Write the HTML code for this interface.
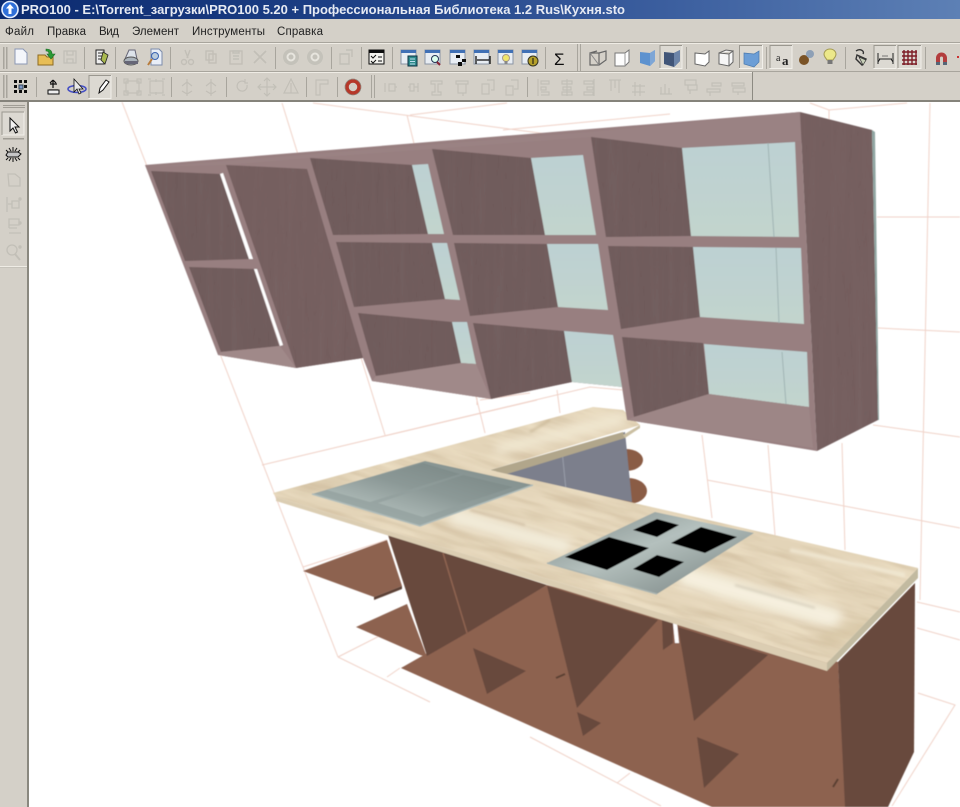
<!DOCTYPE html>
<html><head><meta charset="utf-8"><title>PRO100</title>
<style>html,body{margin:0;padding:0;background:#fff;width:960px;height:807px;overflow:hidden}svg{display:block}</style></head>
<body>
<svg xmlns="http://www.w3.org/2000/svg" width="960" height="807" viewBox="0 0 960 807">
<defs>
<linearGradient id="tb" x1="0" x2="1" y1="0" y2="0"><stop offset="0" stop-color="#0b2a6f"/><stop offset=".35" stop-color="#1d3f85"/><stop offset=".7" stop-color="#3c5f9f"/><stop offset="1" stop-color="#5d80b5"/></linearGradient>
<linearGradient id="gl" x1="0" x2="0" y1="0" y2="1"><stop offset="0" stop-color="#bdd1d3"/><stop offset="1" stop-color="#c2d4cd"/></linearGradient>
<linearGradient id="sink" x1="0" x2="1" y1="1" y2="0"><stop offset="0" stop-color="#a3b0ae"/><stop offset="1" stop-color="#7f8c8a"/></linearGradient>
<linearGradient id="basinA" x1="0" x2="1" y1="1" y2="0"><stop offset="0" stop-color="#b3bfbc"/><stop offset=".5" stop-color="#8c9997"/><stop offset="1" stop-color="#7b8886"/></linearGradient>
<linearGradient id="hob" x1="0" x2="1" y1="0" y2="1"><stop offset="0" stop-color="#7d8886"/><stop offset=".45" stop-color="#b4c0bd"/><stop offset="1" stop-color="#747f7e"/></linearGradient>
<filter id="wood" x="0" y="0" width="1" height="1"><feTurbulence type="fractalNoise" baseFrequency=".16 .008" numOctaves="2" seed="3" result="n"/><feColorMatrix in="n" type="matrix" values="0 0 0 0 .25 0 0 0 0 .18 0 0 0 0 .18 0 0 0 .3 -.11" result="m"/><feComposite in="m" in2="SourceGraphic" operator="in" result="c"/><feMerge><feMergeNode in="SourceGraphic"/><feMergeNode in="c"/></feMerge></filter>
<filter id="marble" filterUnits="userSpaceOnUse" x="320" y="400" width="660" height="200" color-interpolation-filters="sRGB"><feTurbulence type="fractalNoise" baseFrequency=".012 .09" numOctaves="3" seed="8"/><feColorMatrix type="matrix" values="0 0 0 0 .97 0 0 0 0 .93 0 0 0 0 .83 1.5 0 0 0 -.55"/></filter>
<filter id="marble2" filterUnits="userSpaceOnUse" x="320" y="400" width="660" height="200" color-interpolation-filters="sRGB"><feTurbulence type="fractalNoise" baseFrequency=".015 .13" numOctaves="3" seed="21"/><feColorMatrix type="matrix" values="0 0 0 0 .68 0 0 0 0 .57 0 0 0 0 .43 1.4 0 0 0 -.62"/></filter>
<filter id="soft" x="-5%" y="-5%" width="110%" height="110%"><feGaussianBlur stdDeviation=".45"/></filter>
<filter id="st" filterUnits="userSpaceOnUse" x="0" y="0" width="960" height="807"><feGaussianBlur stdDeviation="5"/></filter>
<filter id="st2" filterUnits="userSpaceOnUse" x="0" y="0" width="960" height="807"><feGaussianBlur stdDeviation="1.2"/></filter>
<filter id="ic"><feGaussianBlur stdDeviation=".3"/></filter>
<clipPath id="top"><polygon points="273,493 593,407 623,410 640,425 490,470 918,568 827,663 276,497"/></clipPath>
<g id="win"><rect x="-8" y="-8" width="15" height="14" fill="#e8edf3" stroke="#8a95a5"/><rect x="-8" y="-8" width="15" height="3" fill="#3f6fb5"/></g>
</defs>

<!-- viewport -->
<rect width="960" height="807" fill="#fff"/>
<g filter="url(#soft)">
<g fill="none" stroke="#f0d2c8" stroke-width="1">
<path d="M122 102L338 657M282 103L385 435M407 115L485 433M262 465L537 400M262 465L590 387L623 390M303 567L387 540"/>
<path d="M338 657L430 702M338 657L407 622M313 103L600 141M410 115L507 103M503 130L670 114M810 103L829 110L907 103M829 110V120"/>
<path d="M930 103L920 600M877 217H960M878 328L960 332M873 425L960 437M707 480L960 528M702 435L712 518M768 445L775 535M842 443L845 550"/>
<path d="M917 602L960 612M917 628L960 640M918 693L955 705L892 806M530 737L661 806M617 783L630 773M387 677L400 668M557 390L560 413M480 400L530 393M477 398V405"/>
</g>
<!-- floor pieces -->
<polygon points="303,571 387,540 402,586 374,597" fill="#8d6250"/>
<polygon points="374,597 402,586 402,589 374,600" fill="#5b4034"/>
<polygon points="356,627 407,604 427,657 420,655" fill="#8d6250"/>
<polygon points="401,668 547,585 838,662 846,807 712,807" fill="#8d6250"/>
<!-- side -->
<polygon points="838,662 915,583 914,752 888,807 845,807" fill="#68493c"/>
<!-- dark panels -->
<polygon points="388,535 547,585 467,633 427,656" fill="#68493c"/>
<path d="M443 553L467 633" stroke="#8d6250" stroke-width="1.6"/>
<polygon points="547,586 658,620 577,708" fill="#68493c"/>
<polygon points="662,620 673,623 673,643 663,650" fill="#68493c"/>
<polygon points="673,623 677,623 679,643 675,643" fill="#fff"/>
<polygon points="678,627 768,655 694,721" fill="#68493c"/>
<polygon points="473,648 526,671 487,694" fill="#68493c"/>
<polygon points="577,712 601,723 583,736" fill="#68493c"/>
<polygon points="697,737 739,754 704,788" fill="#68493c"/>
<path d="M556 678L565 674M833 787L838 779" stroke="#5a3f33" stroke-width="2"/>
<!-- round shelves -->
<ellipse cx="628" cy="491" rx="19" ry="13" fill="#8a5b45"/>
<ellipse cx="626" cy="460" rx="17" ry="11" fill="#8a5b45"/>
<!-- gray cabinet -->
<polygon points="495,472 625,432 632,502 530,482" fill="#7b7f8c"/>
<path d="M562 450L566 490" stroke="#9a9ea9" stroke-width="1"/>
<!-- counter -->
<polygon points="490,470 623,432 625,438 507,474" fill="#b1a68b"/>
<polygon points="623,435 640,425 640,428 625,438" fill="#cbbfa3"/>
<polygon points="276,497 827,663 827,671 276,501" fill="#dbcdb2"/>
<polygon points="827,663 918,568 918,578 827,671" fill="#c2baa0"/>
<polygon points="273,493 593,407 623,410 640,425 490,470 918,568 827,663 276,497" fill="#e3d4b8"/>
<g clip-path="url(#top)">
<rect x="320" y="400" width="660" height="200" filter="url(#marble)" transform="rotate(16 600 540) translate(-60 0)" opacity=".6"/>
<rect x="320" y="400" width="660" height="200" filter="url(#marble2)" transform="rotate(16 600 540) translate(-60 0)" opacity=".4"/>
<path d="M495 450L625 418" stroke="#f1e8d2" stroke-width="12" filter="url(#st)"/>
<path d="M530 432L550 420" stroke="#b9a583" stroke-width="2" filter="url(#st2)" opacity=".6"/>
<path d="M450 515L570 548" stroke="#f3ecda" stroke-width="16" filter="url(#st)"/>
<path d="M470 510L525 525" stroke="#a98d6e" stroke-width="1.2" filter="url(#st2)" opacity=".6"/>
<path d="M680 575L840 620" stroke="#f6f0df" stroke-width="20" filter="url(#st)"/>
<path d="M735 585L815 608" stroke="#a9a38f" stroke-width="1.4" filter="url(#st2)" opacity=".6"/>
<path d="M790 550L905 575" stroke="#f2ead6" stroke-width="4" filter="url(#st2)" opacity=".8"/>
<path d="M300 490L350 478" stroke="#bda98a" stroke-width="3" filter="url(#st)" opacity=".6"/>
<path d="M880 625L820 640" stroke="#d3c19f" stroke-width="16" filter="url(#st)" opacity=".6"/>
</g>
<!-- sink -->
<polygon points="312,494 425,461 533,485 420,526" fill="url(#sink)"/>
<polygon points="327,490 423,463 460,474 370,502" fill="url(#basinA)"/>
<polygon points="378,503 463,475 513,487 423,517" fill="url(#basinA)"/>
<path d="M312 494L420 526L533 485" fill="none" stroke="#aebbb9" stroke-width="1.5"/>
<!-- hob -->
<polygon points="547,563 655,512 754,533 657,594" fill="url(#hob)"/>
<path d="M547 563L657 594" stroke="#a7b3b1" stroke-width="1.5"/>
<g fill="#000"><polygon points="565,557 609,537 649,548 607,570"/><polygon points="633,530 657,519 679,525 657,537"/><polygon points="671,543 701,527 737,537 705,553"/><polygon points="633,569 657,555 684,562 659,577"/></g>

<!-- upper cabinets -->
<polygon points="145,165 800,112 817,451 627,420 622,387 572,382 491,399 372,381 363,358 296,368 218,355" fill="#987f80"/>
<polygon points="150,167 590,132 800,112 806,140 682,148 591,137 432,149 310,158 226,165" fill="#9a8283"/>
<g filter="url(#wood)">
<polygon points="800,112 872,130 878,420 817,451" fill="#745f5f"/>
<polygon points="151,171 220,174 249,259 185,261" fill="#6f5b5b"/>
<polygon points="189,267 254,269 279,346 221,352" fill="#6f5b5b"/>
<polygon points="226,165 307,169 363,358 296,368" fill="#745f5f"/>
<polygon points="310,158 412,165 428,234 333,235" fill="#6f5b5b"/>
<polygon points="336,242 432,243 445,299 354,307" fill="#6f5b5b"/>
<polygon points="358,313 452,322 461,363 376,376" fill="#6f5b5b"/>
<polygon points="432,149 531,158 545,235 453,235" fill="#6f5b5b"/>
<polygon points="454,243 547,244 558,307 470,316" fill="#6f5b5b"/>
<polygon points="473,323 564,331 572,382 491,399" fill="#6f5b5b"/>
<polygon points="591,137 682,148 691,236 606,237" fill="#6f5b5b"/>
<polygon points="608,246 693,247 700,317 621,329" fill="#6f5b5b"/>
<polygon points="622,337 703,343 709,394 634,417" fill="#6f5b5b"/>
</g>
<polygon points="872,130 875,132 879,420 878,420" fill="#8fa5a1"/>
<g fill="#fff"><polygon points="220,174 223,173 253,259 249,259"/><polygon points="254,269 257,269 283,345 280,346"/></g>
<g fill="url(#gl)">
<polygon points="412,165 428,164 444,234 428,234"/>
<polygon points="432,243 447,243 460,300 445,299"/>
<polygon points="452,322 467,322 476,364 461,363"/>
<polygon points="531,158 583,155 596,235 545,235"/>
<polygon points="547,244 598,244 608,310 558,307"/>
<polygon points="564,331 613,335 622,387 572,382"/>
<polygon points="682,148 795,142 799,237 691,236"/>
<polygon points="693,247 801,248 804,324 700,317"/>
<polygon points="704,344 807,352 809,407 709,394"/>
</g>
<path d="M768 143L774 237M776 248L779 323M782 352L786 404" stroke="#9fb3b3" stroke-width="1" fill="none"/>
<polygon points="218,355 221,352 280,346 296,368" fill="#a08989"/>
<polygon points="372,381 376,376 461,363 476,364 491,399" fill="#a08989"/>
<polygon points="627,420 634,417 709,394 809,407 813,448" fill="#9d8686"/>
</g>

<!-- title bar -->
<rect width="960" height="19" fill="url(#tb)"/>
<circle cx="10" cy="9.5" r="8" fill="#2f6fd8" stroke="#e8f0ff" stroke-width="1.6"/>
<path d="M10 4L14 8.5H11.5V14H8.5V8.5H6Z" fill="#fff"/>
<text x="21" y="14" font-family="'Liberation Sans','Noto Sans CJK SC',sans-serif" font-size="13" font-weight="700" fill="#e6eaf3" textLength="604" lengthAdjust="spacing">PRO100 - E:\Torrent_загрузки\PRO100 5.20 + Профессиональная Библиотека 1.2 Rus\Кухня.sto</text>

<!-- menu + toolbars -->
<rect y="19" width="960" height="83" fill="#d4d0c8"/>
<g font-family="'Liberation Sans','Noto Sans CJK SC',sans-serif" font-size="11.5" fill="#222">
<text x="5" y="35" textLength="29">Файл</text><text x="47" y="35" textLength="39">Правка</text><text x="99" y="35" textLength="20">Вид</text><text x="132" y="35" textLength="47">Элемент</text><text x="192" y="35" textLength="73">Инструменты</text><text x="277" y="35" textLength="46">Справка</text>
</g>
<rect y="42" width="960" height="1" fill="#a8a59d"/>
<rect y="43" width="960" height="1" fill="#efece5"/>
<rect y="71" width="960" height="1" fill="#a8a59d"/>
<rect y="72" width="752" height="1" fill="#efece5"/>
<rect y="100" width="960" height="2" fill="#85837b"/>
<rect x="752" y="72" width="1" height="28" fill="#8c8a82"/>

<!-- separators -->
<g fill="#a8a59d">
<path d="M3 47h1.5v22H3zM6 47h1.5v22H6zM84 47h1v22h-1zM115 47h1v22h-1zM170 47h1v22h-1zM275 47h1v22h-1zM331 47h1v22h-1zM361 47h1v22h-1zM392 47h1v22h-1zM545 47h1v22h-1zM577 44h1v27H577zM580 44h1v27H580zM686 47h1v22h-1zM766 47h1v22h-1zM845 47h1v22h-1zM925 47h1v22h-1z"/>
<path d="M3 75h1.5v23H3zM6 75h1.5v23H6zM36 77h1v20h-1zM116 77h1v20h-1zM171 77h1v20h-1zM226 77h1v20h-1zM306 77h1v20h-1zM337 77h1v20h-1zM371 75h1v23H371zM374 75h1v23H374zM527 77h1v20h-1z"/>
</g>
<!-- pressed buttons -->
<g fill="#dcd9d2" stroke="#f2f0ea">
<rect x="660" y="45.500" width="22" height="23"/><rect x="739.500" y="45.500" width="23" height="23"/><rect x="770" y="45.500" width="22" height="23"/><rect x="874" y="45.500" width="22" height="23"/><rect x="898" y="45.500" width="23" height="23"/>
<rect x="89" y="75.500" width="22" height="23"/>
</g>
<g fill="none" stroke="#9a978f"><path d="M660 68V45.500H682M739.500 68V45.500H762M770 68V45.500H792M874 68V45.500H896M898 68V45.500H921M89 98V75.500H111"/></g>

<g filter="url(#ic)">
<!-- row1 -->
<path d="M15 49h8l4 4v11H15z" fill="#f4f6fb" stroke="#8b98b5"/>
<path d="M38 55h7l2 2h6v8H38z" fill="#e7bd55" stroke="#8c6a22"/><path d="M46 49c4 0 6 2 6 5h3l-4 5-4-5h2c0-2-1-3-3-3z" fill="#2c9a36" stroke="#1b6a24" stroke-width=".6"/>
<g fill="none" stroke="#c2bfb7" stroke-width="1.3"><rect x="64" y="51" width="12" height="12"/><path d="M67 51v4h6v-4M67 63v-4h6v4"/></g>
<path d="M96 50h8v14H96z" fill="#eee" stroke="#222"/><path d="M98 53h5M98 56h5M98 59h4" stroke="#333"/><path d="M103 52l5 3-3 9-4-4z" fill="#a9b94f" stroke="#222" stroke-width=".8"/>
<path d="M125 59l4-9h6l2 9z" fill="#dde3ea" stroke="#667"/><ellipse cx="131" cy="61" rx="7" ry="4" fill="#aab3bb" stroke="#555"/><rect x="125" y="61" width="13" height="3" fill="#667"/>
<path d="M151 49h8l3 3v13h-11z" fill="#e9eef7" stroke="#7d8cab"/><circle cx="155" cy="56" r="3.500" fill="#bcd" stroke="#3a62b0"/><path d="M152 59l-4 6" stroke="#b77c3c" stroke-width="2"/>
<g fill="none" stroke="#c2bfb7" stroke-width="1.4">
<path d="M185 50l3 8M190 50l-3 8"/><circle cx="184" cy="62" r="2.500"/><circle cx="191" cy="62" r="2.500"/>
<rect x="206" y="51" width="7" height="9"/><rect x="209" y="54" width="7" height="9"/>
<rect x="230" y="51" width="12" height="13"/><path d="M233 53h6v-2h-6zM233 56h6M233 59h6"/>
<path d="M254 51l12 12M266 51l-12 12" stroke-width="1.6"/>
</g>
<g><circle cx="291" cy="57" r="8" fill="#c4c2ba"/><circle cx="291" cy="57" r="3.500" fill="none" stroke="#e7e5de" stroke-width="2"/><circle cx="315" cy="57" r="8" fill="#c4c2ba"/><circle cx="315" cy="57" r="3.500" fill="none" stroke="#e7e5de" stroke-width="2"/></g>
<path d="M340 54h9v10h-9zM346 50h6v7" fill="none" stroke="#c2bfb7" stroke-width="1.4"/>
<rect x="369" y="50" width="15" height="14" fill="#f4f3ee" stroke="#111"/><rect x="369" y="50" width="15" height="3" fill="#111"/><path d="M371 56l2 2 3-3M371 61l2 2 3-3M378 57h4M378 61h4" fill="none" stroke="#111"/>
<use href="#win" x="409" y="58"/><rect x="408" y="56" width="9" height="10" fill="#2e8b8b" stroke="#134"/><path d="M410 59h5M410 61.500h5M410 64h5" stroke="#bde"/>
<use href="#win" x="433" y="58"/><circle cx="435" cy="59" r="3.500" fill="#dfe" stroke="#235"/><path d="M437 62l3 3" stroke="#823" stroke-width="2"/>
<use href="#win" x="458" y="58"/><path d="M456 55h4v3h-4zM462 59h4v3h-4zM458 62h4v4h-4z" fill="#111"/>
<use href="#win" x="482" y="58"/><path d="M476 56v8M490 56v8M477 60h12" stroke="#111" stroke-width="1.3"/>
<use href="#win" x="506" y="58"/><circle cx="506" cy="58" r="3.500" fill="#f0e56a" stroke="#a98"/><rect x="504.500" y="61" width="3" height="3" fill="#888"/>
<use href="#win" x="530" y="58"/><circle cx="533" cy="61" r="5" fill="#b5a02c" stroke="#332"/><path d="M533 58v6" stroke="#111"/>
<text x="554" y="65" font-family="'Liberation Sans',sans-serif" font-size="17" fill="#111">Σ</text>
<path d="M590 53h9l7-2v9l-7 5h-9zM599 53v12M590 53l7-2" fill="none" stroke="#666" stroke-width="1.2"/><path d="M590 53l9 12" stroke="#888"/>
<path d="M615 53l10 0 4-3v12l-4 4-10 0z" fill="#fdfdfd" stroke="#777"/><path d="M625 53v13" stroke="#999"/>
<path d="M640 52l10 1 5-3v11l-5 5-10-3z" fill="#5d92cf"/><path d="M650 53v13l5-5V50z" fill="#7ea6d6"/>
<path d="M664 52l10 1 6-3v11l-6 6-10-3z" fill="#3f5478"/><path d="M674 53v14l6-6V50z" fill="#6c84a8"/>
<path d="M695 53l10 1 4-3v11l-4 4-10-2z" fill="#fff" stroke="#666"/>
<path d="M719 53l10 1 4-3v11l-4 4-10-2zM729 54v12M719 53l7-3 7 1" fill="#f6f6f6" stroke="#666"/>
<path d="M744 53l10 1 5-3v11l-5 5-10-3z" fill="#6c9ed6" stroke="#4a79ad" stroke-width=".7"/>
<text x="776" y="61" font-family="'Liberation Serif',serif" font-size="10" fill="#222">a</text><text x="782" y="65" font-family="'Liberation Serif',serif" font-size="13" font-weight="700" fill="#222">a</text>
<circle cx="804" cy="60" r="5" fill="#7a5226"/><circle cx="810" cy="54" r="4" fill="#8ea0b6"/>
<path d="M830 49c4 0 6 3 6 5 0 3-2 4-3 6h-6c-1-2-3-3-3-6 0-2 2-5 6-5z" fill="#ece88a" stroke="#a39a52"/><rect x="827.500" y="60" width="5" height="4" fill="#777"/>
<path d="M856 51c4-3 9 0 7 3M857 55l9 4-4 6-6-6z" fill="none" stroke="#333" stroke-width="1.4"/><path d="M859 57l7 3-3 5z" fill="#c8cfb8" stroke="#333" stroke-width=".7"/>
<path d="M878 53v11M893 53v11M879 59h13M878 62l2-3M893 62l-2-3" stroke="#222" fill="none"/><path d="M882 56h6" stroke="#777"/>
<g stroke="#7d1f25" stroke-width="1.4" fill="none"><path d="M904 50v15M908 50v15M912 50v15M916 50v15M902 52h15M902 56h15M902 60h15M902 64h15"/></g>
<path d="M936 65v-7a5 5 0 0 1 11 0v7h-4v-7a1.500 1.500 0 0 0-3 0v7z" fill="#b33c3c"/><rect x="936" y="62" width="4" height="3" fill="#567"/><rect x="943" y="62" width="4" height="3" fill="#567"/>
<path d="M957 57h2" stroke="#c33" stroke-width="2"/>

<!-- row2 -->
<g fill="#111"><rect x="14" y="80" width="3" height="3"/><rect x="19" y="80" width="3" height="3"/><rect x="24" y="80" width="3" height="3"/><rect x="14" y="85" width="3" height="3"/><rect x="24" y="85" width="3" height="3"/><rect x="14" y="90" width="3" height="3"/><rect x="19" y="90" width="3" height="3"/><rect x="24" y="90" width="3" height="3"/></g><rect x="19" y="85" width="4" height="4" fill="#7f97c8" stroke="#345"/>
<path d="M49 90h9M49 93h9M53 80v8M50 84h7M53 80l-3 3M53 80l3 3" stroke="#111" fill="none" stroke-width="1.2"/><rect x="48" y="90" width="11" height="4" fill="#eee" stroke="#111"/>
<ellipse cx="77" cy="89" rx="9" ry="3.500" fill="none" stroke="#4450c4" stroke-width="1.6"/><path d="M74 79v13l3-3 2 5 2-1-2-4h4z" fill="#e8e8e8" stroke="#111" stroke-width=".8"/>
<path d="M99 93l1-5 6-8 3 2-6 8z" fill="#fff" stroke="#111"/>
<g fill="none" stroke="#c2bfb7" stroke-width="1.2">
<rect x="126" y="81" width="13" height="12"/><path d="M124 79h4v4h-4zM137 79h4v4h-4zM124 91h4v4h-4zM137 91h4v4h-4z"/>
<path d="M150 81h13v12h-13zM148 79h3M162 79h3M148 95h3M162 95h3M156 79v3M156 92v3"/>
<path d="M187 79v17M182 86l5-4 5 4M182 91l5 3 5-3"/><path d="M211 79v17M206 86l5-4 5 4M206 91l5 3 5-3"/>
<path d="M247 85a5 5 0 1 1-2-3M245 79v4h3"/><path d="M267 79v17M259 87h16M264 81l3-3 3 3M264 93l3 3 3-3M261 84l-3 3 3 3M273 84l3 3-3 3"/>
<path d="M291 79l7 14h-14z"/><path d="M291 83v10"/>
<path d="M316 80h12v4h-8v11h-4z"/>
<path d="M385 83v9M389 84h6v7h-6zM395 87h2M410 84h4v7h-4zM414 87h4M418 83v9M408 87h2"/>
<path d="M431 81h11v3h-4v8h3v3h-9v-3h3v-8h-4z"/><path d="M456 81h12v3h-12zM458 84v9h8v-9M463 93v3"/>
<path d="M482 84h7v10h-7zM487 80h7v10h-3"/><path d="M506 86h7v9h-7zM511 80h7v9h-4"/>
<path d="M538 79v17M541 81h8v3h-8zM541 87h5v3h-5zM541 92h8v3h-8M562 81h10v3h-10zM567 79v17M563 87h8v3h-8zM562 92h10v3h-10z"/>
<path d="M594 79v17M584 81h9v3h-9zM587 87h6v3h-6zM584 92h9v3h-9zM609 80h12M611 80v11M615 80v8M619 80v13M632 86h13M632 92h13M635 82v14M640 84v12"/>
<path d="M660 94h12M661 94v-7M665 94v-10M669 94v-6M685 80h11v5h-11zM688 85h9v5h-9zM690 90v4M707 89h13v3h-13zM712 83h9v3h-9zM710 92v4M732 83h12v3h-12zM733 88h12v4h-12zM738 92v3"/>
</g>
<circle cx="353" cy="87" r="6" fill="none" stroke="#b6382c" stroke-width="3.500"/><circle cx="353" cy="87" r="8" fill="none" stroke="#8d857c" stroke-width=".7"/>
</g>

<!-- left toolbar -->
<rect y="102" width="27" height="705" fill="#d4d0c8"/>
<rect x="27" y="102" width="2" height="705" fill="#8a887f"/>
<rect x="3" y="105" width="22" height="1" fill="#a09d95"/><rect x="3" y="107" width="22" height="1" fill="#a09d95"/>
<rect x="2" y="112" width="22" height="23" fill="#dcd9d2" stroke="#f2f0ea"/>
<path d="M2 135V112H24" fill="none" stroke="#9a978f"/>
<rect x="3" y="138" width="21" height="1.500" fill="#a09d95"/>
<rect y="266" width="27" height="1" fill="#efece5"/>
<rect y="267" width="27" height="1" fill="#c6c3bb"/>
<g filter="url(#ic)">
<path d="M10 118v13l3-3 2.500 5 2-1-2.500-5h4z" fill="#f2f2f2" stroke="#111"/>
<path d="M8 152h10l3 2-3 3H8l-2-2z" fill="#c6c6c6" stroke="#111"/><path d="M9 148l2 3M13 147v4M17 148l-2 3M6 150l2 2M20 150l-2 2M9 161l2-3M13 162v-4M17 161l-2-3M6 160l2-2M20 160l-2-2" stroke="#111" fill="none"/>
<g fill="none" stroke="#c2bfb7" stroke-width="1.3"><path d="M8 174h7l5 4v8h-11z"/><path d="M7 197v15M8 204h4M12 201h7v7h-7zM19 199h2"/><path d="M9 219h10v6H9zM9 225v3M9 233h12M9 228h8"/><circle cx="12" cy="250" r="5"/><path d="M15 254l5 6" stroke-width="2"/></g>
<g fill="#c2bfb7"><circle cx="20" cy="199" r="1.700"/><circle cx="20" cy="223" r="1.700"/><circle cx="20" cy="247" r="1.700"/></g>
</g>
</svg>
</body></html>
